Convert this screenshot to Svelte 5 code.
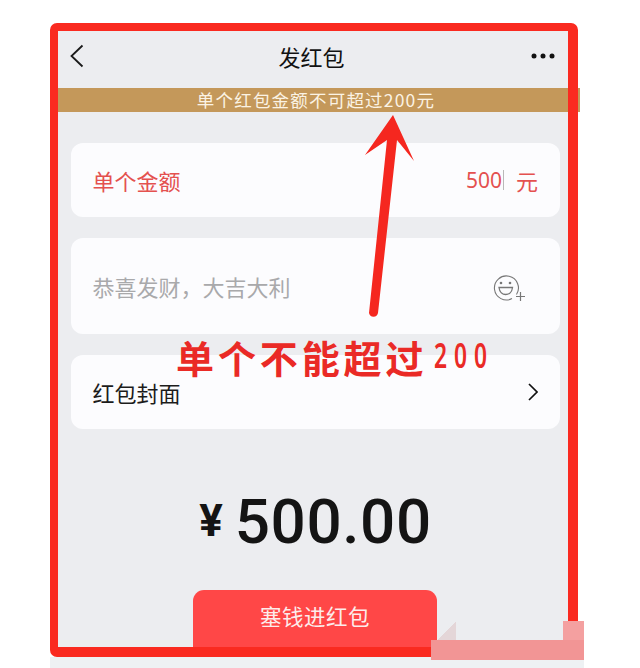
<script lang="ts">
	const rows = [
		{ label: '红包封面' }
	];
</script>

<div class="page">
	<div class="frame">
		<header class="topbar">
			<svg class="back" width="14" height="24" viewBox="0 0 14 24" fill="none">
				<path d="M12.5 1.5L1.5 12L12.5 22.5" stroke="#1a1a1a" stroke-width="1.8" />
			</svg>
			<h1>发红包</h1>
			<svg class="more" width="24" height="6" viewBox="0 0 24 6">
				<circle cx="3" cy="3" r="2.5" fill="#111" />
				<circle cx="12" cy="3" r="2.5" fill="#111" />
				<circle cx="21" cy="3" r="2.5" fill="#111" />
			</svg>
		</header>

		<div class="banner">单个红包金额不可超过200元</div>

		<div class="cards">
			<div class="card amount-card">
				<span>单个金额</span>
				<span class="value"><span class="num">500</span><i class="caret"></i><span class="unit">元</span></span>
			</div>
			<div class="card wish-card">
				<span>恭喜发财，大吉大利</span>
				<svg width="36" height="30" viewBox="0 0 36 30" fill="none" stroke="#777">
					<path d="M23.5 21.5A12 12 0 1 0 19 25.6" stroke-width="1.1" />
					<circle cx="8" cy="10" r="1.3" fill="#777" stroke="none" />
					<circle cx="17" cy="10" r="1.3" fill="#777" stroke="none" />
					<path d="M6 14.5H19.5C19 19 16 21.5 12.7 21.5C9.5 21.5 6.5 19 6 14.5Z" stroke-width="1.3" />
					<path d="M23 23.5H32M27.5 19V28" stroke-width="1.2" />
				</svg>
			</div>
			{#each rows as row}
				<div class="card cover-card">
					<span>{row.label}</span>
					<svg width="10" height="18" viewBox="0 0 10 18" fill="none">
						<path d="M1 1L9 9L1 17" stroke="#111" stroke-width="1.7" />
					</svg>
				</div>
			{/each}
		</div>

		<div class="total"><span class="yen">¥</span><span class="sum">500.00</span></div>

		<button class="submit">塞钱进红包</button>
	</div>
	<div class="below"></div>

	<!-- annotations drawn on top of the screenshot -->
	<div class="banner-tab"></div>
	<svg class="arrow" width="70" height="210" viewBox="0 0 70 210">
		<path
			d="M32 0L53 46L36 25L17 198A4.6 4.6 0 0 1 8 198L26 25L4 40Z"
			fill="#f5271f"
		/>
	</svg>
	<div class="note"><span class="note-cn">单个不能超过</span><span class="note-num">200</span></div>
	<div class="smear smear-h"></div>
	<div class="smear smear-v"></div>
	<div class="smear-tri"></div>
</div>

<style>
	:global(body) {
		margin: 0;
		background: #fff;
	}
	.page {
		position: relative;
		width: 640px;
		height: 668px;
		box-sizing: border-box;
		padding: 23px 0 0 50px;
		overflow: hidden;
		background: #fff;
		font-family: "Noto Sans CJK SC", "Noto Sans", sans-serif;
	}
	.frame {
		display: flex;
		flex-direction: column;
		box-sizing: border-box;
		width: 528px;
		height: 634px;
		border: solid #fa2a20;
		border-width: 8px 10px 10px 8px;
		border-radius: 7px;
		background: #ecedf0;
		overflow: hidden;
	}
	.below {
		width: 534px;
		height: 11px;
		background: #eef1f3;
	}
	.topbar {
		display: flex;
		align-items: center;
		justify-content: space-between;
		height: 57px;
		padding: 0 13px 8px 12px;
		box-sizing: border-box;
		flex: none;
	}
	.topbar h1 {
		margin: 0 0 0 8px;
		font-size: 22px;
		font-weight: 400;
		line-height: 30px;
		color: #111;
	}
	.banner {
		flex: none;
		height: 24px;
		line-height: 24px;
		background: #c4985a;
		color: #fbf3e4;
		font-size: 17.5px;
		letter-spacing: 1.2px;
		text-align: center;
		padding-left: 6px;
	}
	.cards {
		display: flex;
		flex-direction: column;
		gap: 21px;
		padding: 31px 8px 0 13px;
	}
	.card {
		display: flex;
		align-items: center;
		justify-content: space-between;
		box-sizing: border-box;
		padding: 0 22px 0 21.5px;
		border-radius: 12px;
		background: #fcfcfe;
		font-size: 22px;
		line-height: 30px;
		color: #1c1c1c;
	}
	.amount-card {
		height: 74px;
		color: #e4514f;
	}
	.value {
		display: flex;
		align-items: center;
	}
	.caret {
		width: 1px;
		height: 20px;
		margin: 0 12px 0 1px;
		background: #b9b9b9;
	}
	.num {
		font-family: "Noto Sans", sans-serif;
		font-size: 21px;
	}
	.wish-card {
		height: 96px;
		color: #a9a9ab;
		padding-right: 31px;
	}
	.wish-card svg {
		margin-top: 3px;
	}
	.cover-card {
		height: 74px;
	}
	.total {
		display: flex;
		align-items: baseline;
		justify-content: center;
		margin: 55px 0 0 0;
		padding-left: 5px;
		color: #141414;
		font-family: Roboto, sans-serif;
		font-weight: 500;
		line-height: 76px;
	}
	.yen {
		font-size: 44px;
		font-weight: 700;
		margin-right: 12px;
		position: relative;
		top: -7px;
	}
	.sum {
		font-size: 62px;
		letter-spacing: 0.6px;
	}
	.submit {
		display: block;
		flex: none;
		width: 244px;
		height: 57px;
		margin: auto 0 0 135px;
		padding: 0 0 6px;
		border: 0;
		border-radius: 11px 11px 0 0;
		background: #ff4747;
		color: #fdeceb;
		font: 400 21.5px "Noto Sans CJK SC", sans-serif;
		letter-spacing: 0.5px;
	}
	.banner-tab {
		position: absolute;
		left: 578px;
		top: 88px;
		width: 2px;
		height: 24px;
		background: #c4985a;
	}
	.arrow {
		position: absolute;
		left: 361px;
		top: 115px;
	}
	.note {
		position: absolute;
		left: 176px;
		top: 331px;
		display: flex;
		align-items: center;
		height: 52px;
		color: #ea2a26;
		white-space: nowrap;
	}
	.note-cn {
		font-size: 38px;
		font-weight: 700;
		letter-spacing: 3.9px;
		line-height: 52px;
	}
	.note-num {
		margin: 0 0 5px 7px;
		font-size: 35px;
		font-family: "Noto Sans", sans-serif;
		font-weight: 600;
		letter-spacing: 10.8px;
		transform: scaleX(0.65);
		transform-origin: left center;
	}
	.smear {
		position: absolute;
		background: #f29595;
	}
	.smear-h {
		left: 431px;
		top: 640px;
		width: 153px;
		height: 20px;
	}
	.smear-v {
		left: 563px;
		top: 621px;
		width: 21px;
		height: 19px;
		background: #f4a0a0;
	}
	.smear-tri {
		position: absolute;
		left: 438px;
		top: 622px;
		width: 18px;
		height: 18px;
		background: linear-gradient(135deg, transparent 50%, #e4d6d8 50%);
	}
</style>
